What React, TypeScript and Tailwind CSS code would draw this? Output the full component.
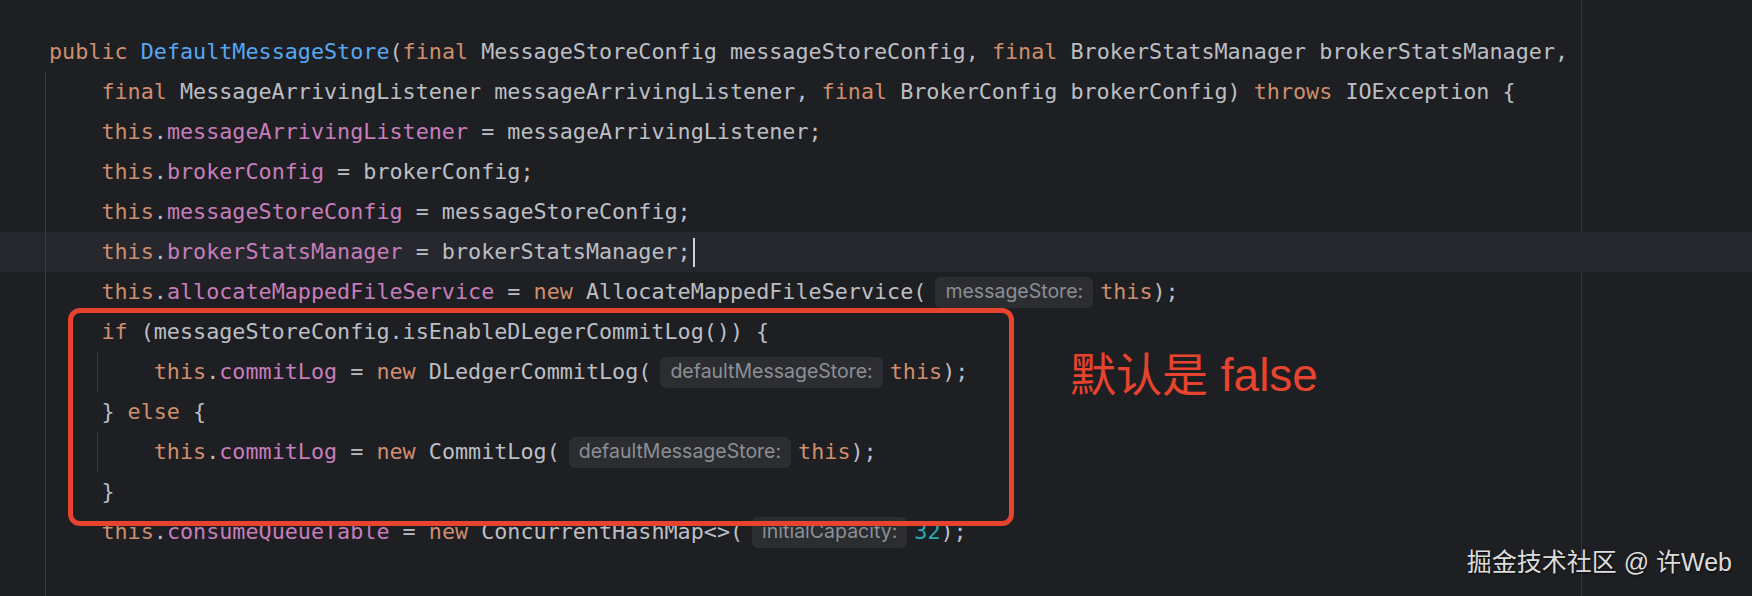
import React from "react";

type Kind = "kw" | "fn" | "field" | "num" | "txt";
type Tok = { t: string; k?: Kind; hint?: string };
type Line = { indent: number; guides: number; toks: Tok[]; current?: boolean };

const color: Record<Kind, string> = {
  kw: "text-[#cf8e6d]",
  fn: "text-[#56a8f5]",
  field: "text-[#c77dbb]",
  num: "text-[#2aacb8]",
  txt: "text-[#bcbec4]",
};

const self = (name: string, rest: Tok[]): Tok[] => [
  { t: "this", k: "kw" },
  { t: "." },
  { t: name, k: "field" },
  ...rest,
];

const lines: Line[] = [
  {
    indent: 0,
    guides: 0,
    toks: [
      { t: "public", k: "kw" },
      { t: " " },
      { t: "DefaultMessageStore", k: "fn" },
      { t: "(" },
      { t: "final", k: "kw" },
      { t: " MessageStoreConfig messageStoreConfig, " },
      { t: "final", k: "kw" },
      { t: " BrokerStatsManager brokerStatsManager," },
    ],
  },
  {
    indent: 1,
    guides: 1,
    toks: [
      { t: "final", k: "kw" },
      { t: " MessageArrivingListener messageArrivingListener, " },
      { t: "final", k: "kw" },
      { t: " BrokerConfig brokerConfig) " },
      { t: "throws", k: "kw" },
      { t: " IOException {" },
    ],
  },
  { indent: 1, guides: 1, toks: self("messageArrivingListener", [{ t: " = messageArrivingListener;" }]) },
  { indent: 1, guides: 1, toks: self("brokerConfig", [{ t: " = brokerConfig;" }]) },
  { indent: 1, guides: 1, toks: self("messageStoreConfig", [{ t: " = messageStoreConfig;" }]) },
  { indent: 1, guides: 1, current: true, toks: self("brokerStatsManager", [{ t: " = brokerStatsManager;" }]) },
  {
    indent: 1,
    guides: 1,
    toks: self("allocateMappedFileService", [
      { t: " = " },
      { t: "new", k: "kw" },
      { t: " AllocateMappedFileService(" },
      { t: "", hint: "messageStore:" },
      { t: "this", k: "kw" },
      { t: ");" },
    ]),
  },
  {
    indent: 1,
    guides: 1,
    toks: [{ t: "if", k: "kw" }, { t: " (messageStoreConfig.isEnableDLegerCommitLog()) {" }],
  },
  {
    indent: 2,
    guides: 2,
    toks: self("commitLog", [
      { t: " = " },
      { t: "new", k: "kw" },
      { t: " DLedgerCommitLog(" },
      { t: "", hint: "defaultMessageStore:" },
      { t: "this", k: "kw" },
      { t: ");" },
    ]),
  },
  { indent: 1, guides: 1, toks: [{ t: "} " }, { t: "else", k: "kw" }, { t: " {" }] },
  {
    indent: 2,
    guides: 2,
    toks: self("commitLog", [
      { t: " = " },
      { t: "new", k: "kw" },
      { t: " CommitLog(" },
      { t: "", hint: "defaultMessageStore:" },
      { t: "this", k: "kw" },
      { t: ");" },
    ]),
  },
  { indent: 1, guides: 1, toks: [{ t: "}" }] },
  {
    indent: 1,
    guides: 1,
    toks: self("consumeQueueTable", [
      { t: " = " },
      { t: "new", k: "kw" },
      { t: " ConcurrentHashMap<>(" },
      { t: "", hint: "initialCapacity:" },
      { t: "32", k: "num" },
      { t: ");" },
    ]),
  },
];

function Hint({ label }: { label: string }) {
  return (
    <span className="inline-flex items-center h-[31px] ml-[9px] mr-[7px] px-[10px] rounded-[6px] bg-[#2b2d31] text-[#8c8f95] text-[19.5px] [font-family:Inter,'Noto_Sans',sans-serif]">
      {label}
    </span>
  );
}

function CodeLine({ line }: { line: Line }) {
  return (
    <div className={`flex h-[40px] pl-[45px] ${line.current ? "bg-[#26282d]" : ""}`}>
      {Array.from({ length: line.indent }).map((_, i) => (
        <div
          key={i}
          className={`w-[4ch] shrink-0 border-l ${i < line.guides ? "border-[#393b40]" : "border-transparent"}`}
        />
      ))}
      <div className="flex items-center pl-[4px] whitespace-pre">
        {line.toks.map((tok, i) =>
          tok.hint ? (
            <Hint key={i} label={tok.hint} />
          ) : (
            <span key={i} className={color[tok.k ?? "txt"]}>
              {tok.t}
            </span>
          )
        )}
        {line.current && <span className="inline-block w-[2px] h-[29px] ml-[2px] bg-[#ced0d6]" />}
      </div>
    </div>
  );
}

export default function App() {
  return (
    <div className="relative w-[1752px] h-[596px] overflow-hidden bg-[#1e1f22] [font-family:'DejaVu_Sans_Mono',monospace] text-[21.75px]">
      {/* right margin guide */}
      <div className="absolute left-[1581px] top-0 bottom-0 w-px bg-[#35373c]" />

      <div className="relative pt-[32px]">
        {lines.map((line, i) => (
          <CodeLine key={i} line={line} />
        ))}
        <div className="ml-[45px] h-[44px] border-l border-[#393b40]" />
      </div>

      {/* annotation */}
      <div className="absolute left-[68px] top-[308px] w-[946px] h-[218px] rounded-[12px] border-[5px] border-[#e8432e]" />
      <div className="absolute left-[1070px] top-[352px] leading-none text-[46px] text-[#e8432e] [font-family:'Liberation_Sans','Noto_Sans_CJK_SC',sans-serif]">
        默认是 false
      </div>

      {/* watermark */}
      <div className="absolute right-[20px] top-[550px] leading-none text-[25px] text-[#dcdcdc] [text-shadow:1px_1px_2px_rgba(0,0,0,0.7)] [font-family:'Liberation_Sans','Noto_Sans_CJK_SC',sans-serif]">
        掘金技术社区 @ 许Web
      </div>
    </div>
  );
}
